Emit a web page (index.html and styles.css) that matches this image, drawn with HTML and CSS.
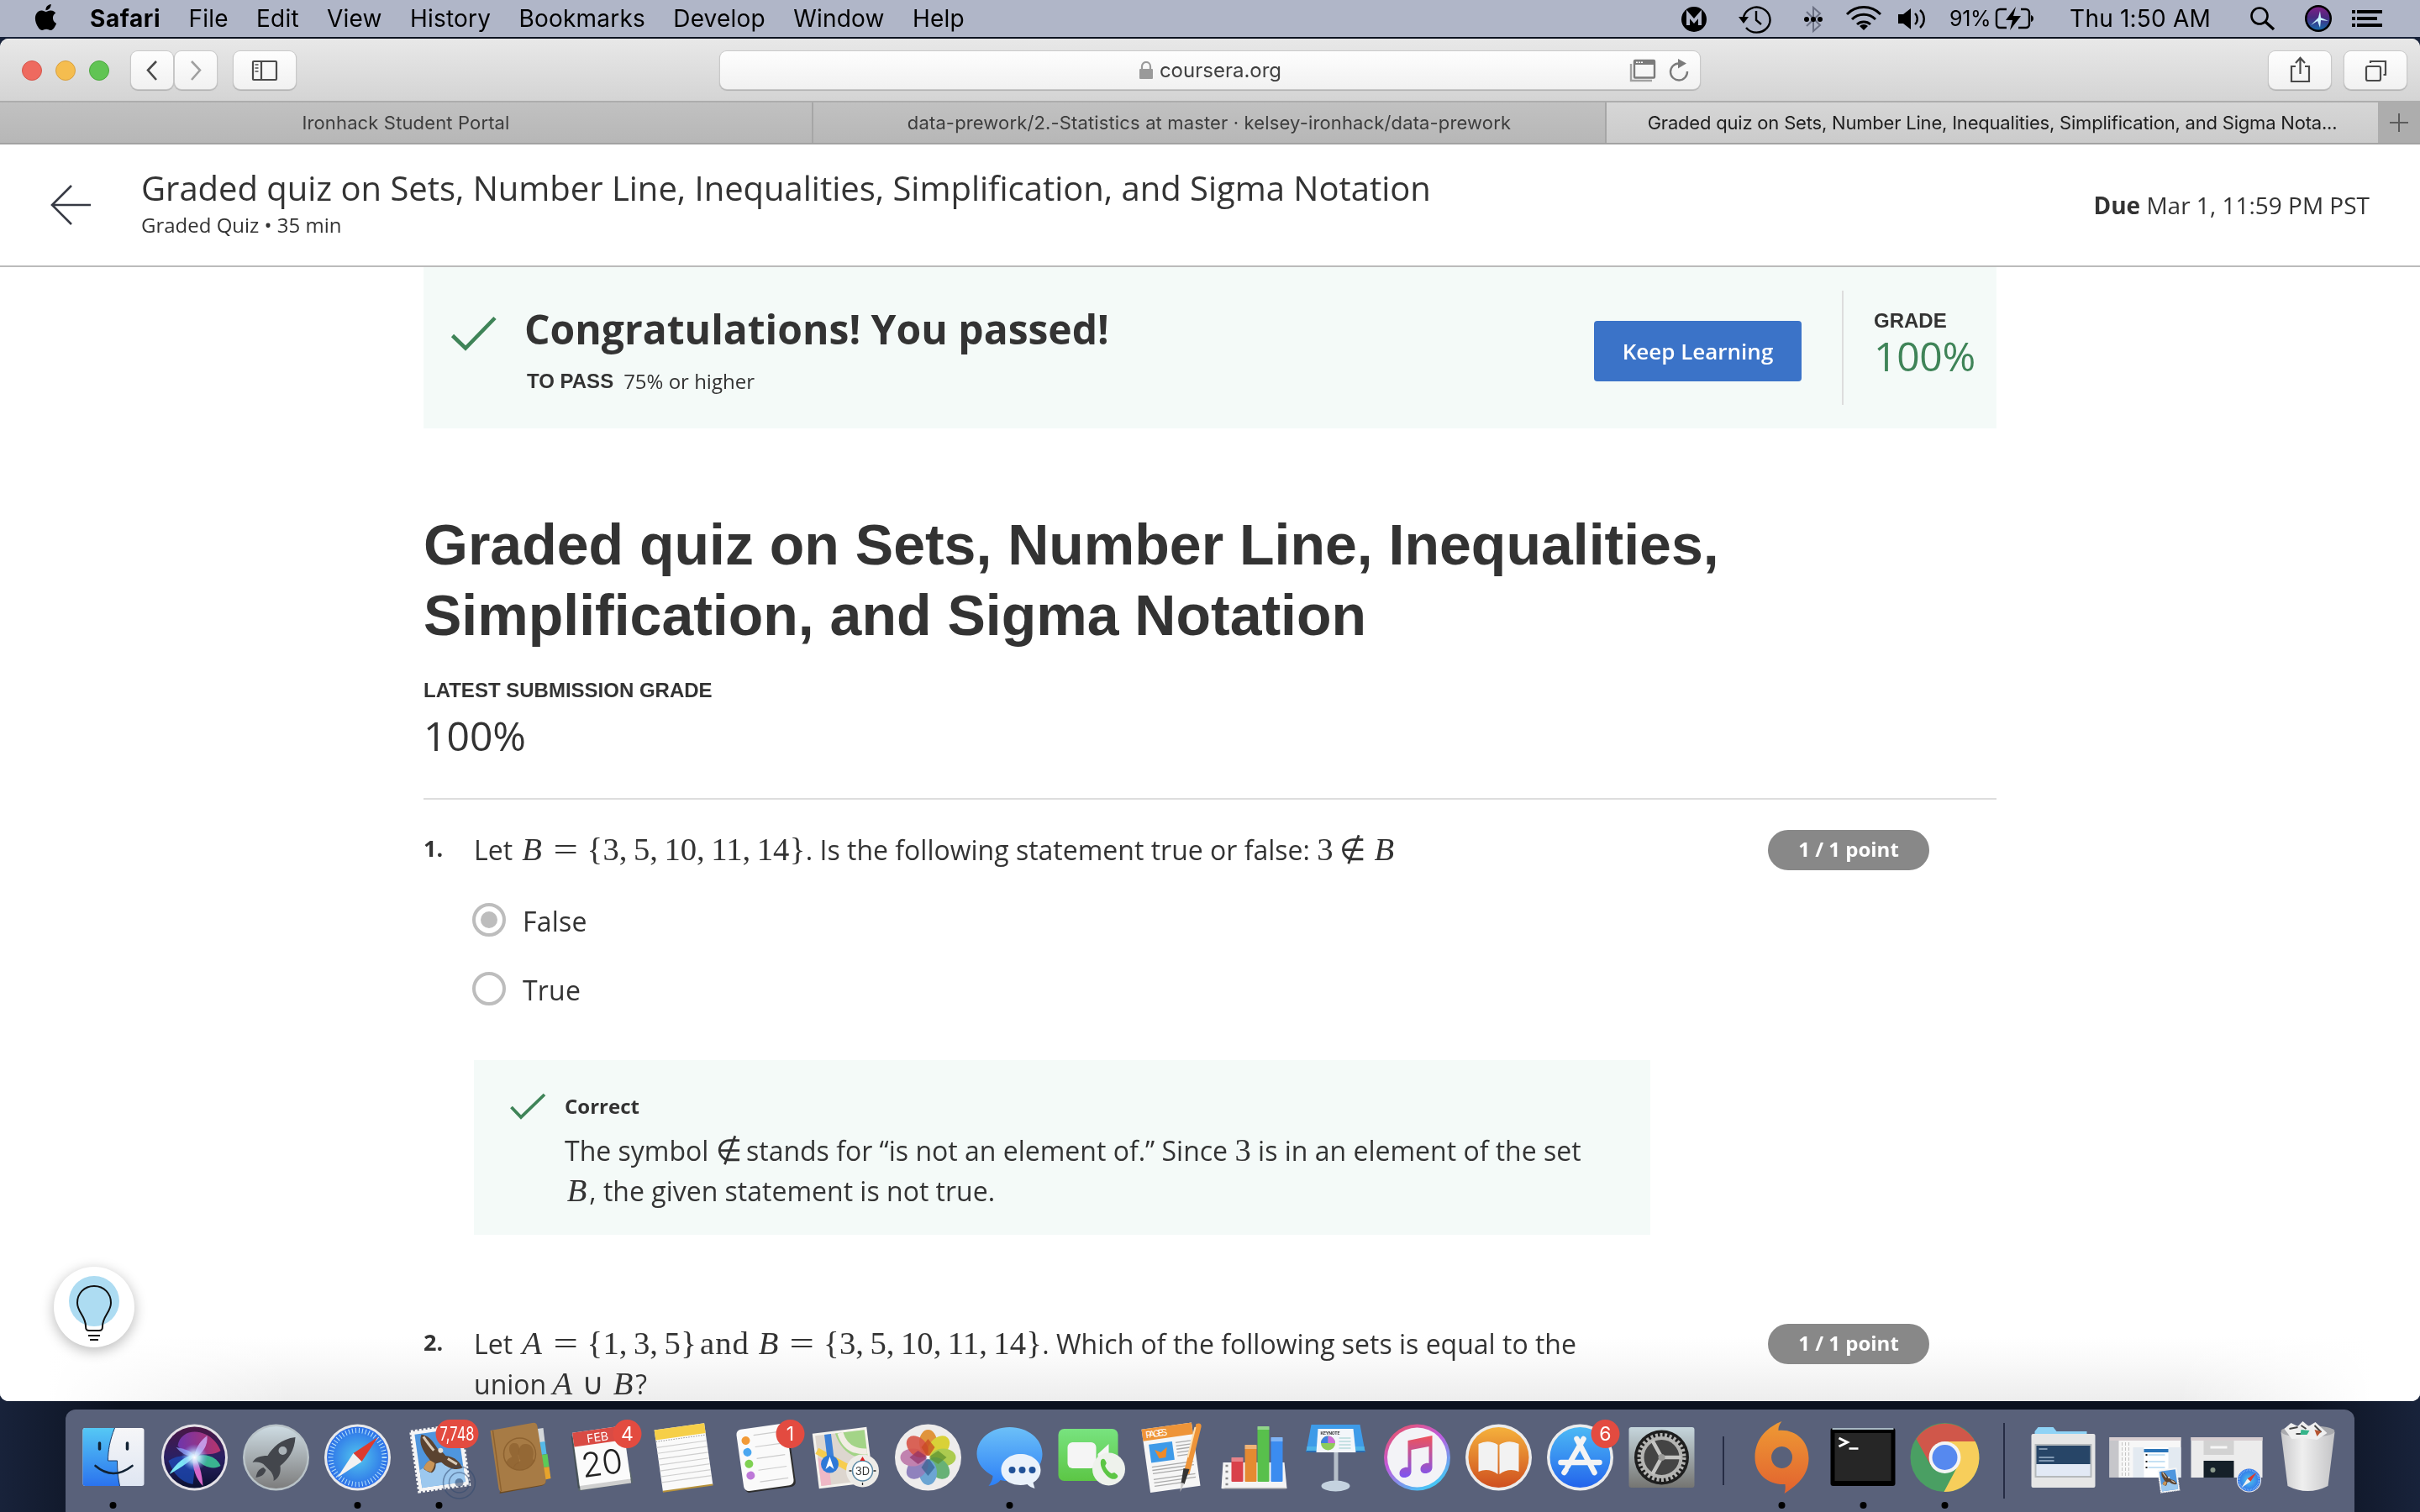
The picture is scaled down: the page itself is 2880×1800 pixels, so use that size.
FILE: index.html
```html
<!DOCTYPE html>
<html lang="en">
<head>
<meta charset="utf-8">
<title>Graded quiz</title>
<link rel="stylesheet" href="styles.css">
</head>
<body>
<div class="desktop">
<header class="menubar">
  <svg class="apple" width="31" height="31" viewBox="0 0 24 24"><path d="M12.152 6.896c-.948 0-2.415-1.078-3.96-1.04-2.04.027-3.91 1.183-4.961 3.014-2.117 3.675-.546 9.103 1.519 12.09 1.013 1.454 2.208 3.09 3.792 3.039 1.52-.065 2.09-.987 3.935-.987 1.831 0 2.35.987 3.96.948 1.637-.026 2.676-1.48 3.676-2.948 1.156-1.688 1.636-3.325 1.662-3.415-.039-.013-3.182-1.221-3.22-4.857-.026-3.04 2.48-4.494 2.597-4.559-1.429-2.09-3.623-2.324-4.39-2.376-2-.156-3.675 1.09-4.61 1.09zM15.53 3.83c.843-1.012 1.4-2.427 1.245-3.83-1.207.052-2.662.805-3.532 1.818-.78.896-1.454 2.338-1.273 3.714 1.338.104 2.715-.688 3.559-1.701"/></svg>
  <nav class="menus">
    <b>Safari</b><span>File</span><span>Edit</span><span>View</span><span>History</span><span>Bookmarks</span><span>Develop</span><span>Window</span><span>Help</span>
  </nav>
  <svg class="status" width="330" height="44" viewBox="1995 0 330 44">
    <circle cx="2019" cy="23" r="15"/><path d="M2012 30V17l7 8 7-8v13" fill="none" stroke="#b2b7c8" stroke-width="4"/>
    <g fill="none" stroke="#000" stroke-width="2.4"><path d="M2078 20a16 15 0 1 1 3 13"/><path d="M2093 13v11l6 5"/></g><path d="M2072 20h12l-6 8z"/>
    <path d="M2153 14l16 16-8 7V9l8 7-16 15" fill="none" stroke="#6b7083" stroke-width="2"/><circle cx="2153" cy="23" r="3"/><circle cx="2161" cy="23" r="3"/><circle cx="2169" cy="23" r="3"/>
    <g fill="none" stroke="#000" stroke-width="3"><path d="M2201 17a28 28 0 0 1 40 0M2207 23a20 20 0 0 1 28 0M2213 29a12 12 0 0 1 16 0"/></g><path d="M2216 31a7 7 0 0 1 10 0l-5 5z"/>
    <path d="M2262 17h6l9-7v25l-9-7h-6z"/><path d="M2282 16a9 9 0 0 1 0 13M2288 12a14 14 0 0 1 0 21" fill="none" stroke="#000" stroke-width="2.4"/>
  </svg>
  <span class="pct">91%</span>
  <svg class="batt" width="48" height="30" viewBox="0 0 48 30"><g fill="none" stroke="#000" stroke-width="2.4"><path d="M15 4H7a4 4 0 0 0-4 4v14a4 4 0 0 0 4 4h8M32 4h6a4 4 0 0 1 4 4v14a4 4 0 0 1-4 4h-9"/></g><path d="M26 1L14 17h8l-3 12 13-17h-9zM44 11v8q3-1 3-4t-3-4z"/></svg>
  <span class="clock">Thu 1:50 AM</span>
  <svg class="status2" width="170" height="44" viewBox="2670 0 170 44">
    <circle cx="2688" cy="19" r="9.5" fill="none" stroke="#000" stroke-width="2.6"/><path d="M2695 26l10 9" stroke="#000" stroke-width="3.4"/>
    <circle cx="2758" cy="22" r="16"/><circle cx="2758" cy="22" r="13.5" fill="url(#siri)"/><path d="M2749 30l9-9 2-8 1 8 9 4-9-1-1 9-3-8z" fill="#c9f3ff"/>
    <path d="M2804 12h30v4h-30zM2804 20h24v4h-24zM2804 28h30v4h-30zM2798 12h4v4h-4zM2798 20h4v4h-4zM2798 28h4v4h-4z"/>
    <defs><linearGradient id="siri" x1="0" y1="0" x2="0" y2="1"><stop offset="0" stop-color="#7d1f86"/><stop offset=".45" stop-color="#4a2a80"/><stop offset="1" stop-color="#1668a8"/></linearGradient></defs>
  </svg>
</header>

<div class="window">
  <div class="toolbar">
    <div class="lights"><i class="red"></i><i class="yellow"></i><i class="green"></i></div>
    <div class="navbtns">
      <div class="btn"><svg width="50" height="45"><path d="M30 12L20 22.500 30 34" fill="none" stroke="#4a4a4a" stroke-width="2.6"/></svg></div>
      <div class="btn"><svg width="50" height="45"><path d="M20 12l10 10.500L20 34" fill="none" stroke="#a0a0a0" stroke-width="2.6"/></svg></div>
    </div>
    <div class="btn side"><svg width="74" height="45"><g fill="none" stroke="#4a4a4a" stroke-width="2.2"><rect x="23" y="12" width="28" height="22" rx="1"/><path d="M33 12v22"/></g><path d="M25.500 16h4M25.500 20h4M25.500 24h4" stroke="#777" stroke-width="2"/></svg></div>
    <div class="url">
      <div class="addr"><svg width="18" height="22" viewBox="0 0 18 22"><rect x="1" y="9" width="16" height="12" rx="1" fill="#9a9a9a"/><path d="M4 9V6a5 5 0 0 1 10 0v3" fill="none" stroke="#9a9a9a" stroke-width="2.2"/></svg><span>coursera.org</span></div>
      <svg class="urlicons" width="76" height="45" viewBox="1940 61 76 45"><path d="M1942 76v20h25" fill="none" stroke="#a2a2a2" stroke-width="2.400"/><rect x="1946" y="72" width="24" height="20.500" rx="1" fill="none" stroke="#7b7b7b" stroke-width="2.400"/><path d="M1946 72h24v5h-24z" fill="#7b7b7b"/><path d="M1948 74.300h2m1 0h2m1 0h2" stroke="#fff" stroke-width="1.500"/><path d="M1999 75.500a10 10 0 1 0 10 9.500" fill="none" stroke="#7b7b7b" stroke-width="2.400"/><path d="M1998 70l10 5.500-10 6z" fill="#7b7b7b"/></svg>
    </div>
    <div class="btn share"><svg width="74" height="45"><g fill="none" stroke="#4a4a4a" stroke-width="2.200"><path d="M32 18h-5v18h21V18h-5M37.500 27V9M32 14l5.500-6 5.500 6"/></g></svg></div>
    <div class="btn tabsbtn"><svg width="74" height="45"><g fill="none" stroke="#4a4a4a" stroke-width="2.200"><rect x="26" y="18" width="17" height="17" rx="2"/><path d="M31 14v-2h18v16h-2.500"/></g></svg></div>
  </div>
  <div class="tabs">
    <div class="tab t1">Ironhack Student Portal</div>
    <div class="tab t2">data-prework/2.-Statistics at master · kelsey-ironhack/data-prework</div>
    <div class="tab t3">Graded quiz on Sets, Number Line, Inequalities, Simplification, and Sigma Nota...</div>
    <div class="tab plus"><svg width="24" height="24"><path d="M12 1v22M1 12h22" stroke="#5c5c5c" stroke-width="2"/></svg></div>
  </div>
  <div class="page">
    <div class="head">
      <svg class="back" width="50" height="50" viewBox="0 0 50 50"><path d="M25 2L2 25l23 23M2 25h46" fill="none" stroke="#373a44" stroke-width="2.600"/></svg>
      <div class="titles"><div class="ttl">Graded quiz on Sets, Number Line, Inequalities, Simplification, and Sigma Notation</div><div class="sub">Graded Quiz • 35 min</div></div>
      <div class="due"><b>Due</b> Mar 1, 11:59 PM PST</div>
    </div>
    <main>
      <section class="banner">
        <svg class="bigcheck" width="56" height="44" viewBox="535 375 56 44"><path d="M538.500 399.500l15.500 15L589 378.500" fill="none" stroke="#3f8458" stroke-width="4.600"/></svg>
        <div class="msg"><div class="congrats">Congratulations! You passed!</div><div class="topass"><b>TO PASS</b><span>75% or higher</span></div></div>
        <div class="keep">Keep Learning</div>
        <div class="grade"><div class="lbl">GRADE</div><div class="val">100%</div></div>
      </section>
      <h1>Graded quiz on Sets, Number Line, Inequalities,<br>Simplification, and Sigma Notation</h1>
      <div class="latest">LATEST SUBMISSION GRADE</div>
      <div class="score">100%</div>
      <section class="q q1">
        <div class="num">1.</div>
        <div class="body">
          <p>Let <span class="m"><i>B</i><u>=</u><s>{</s>3<q>,</q>5<q>,</q>10<q>,</q>11<q>,</q>14<s>}</s></span>. Is the following statement true or false: <span class="m">3<em>∉</em><i>B</i></span></p>
          <div class="opt o1"><span class="radio on"></span><span>False</span></div>
          <div class="opt o2"><span class="radio"></span><span>True</span></div>
          <div class="fb">
            <svg width="44" height="34" viewBox="606 1301 44 34"><path d="M608.500 1318l11.500 12L648 1303" fill="none" stroke="#3f8458" stroke-width="3.800"/></svg>
            <div><div class="correct">Correct</div>
            <p>The symbol <span class="m"><em class="n">∉</em></span> stands for “is not an element of.” Since <span class="m">3</span> is in an element of the set<br><span class="m"><i>B</i></span>, the given statement is not true.</p></div>
          </div>
        </div>
        <div class="pill">1 / 1 point</div>
      </section>
      <section class="q q2">
        <div class="num">2.</div>
        <div class="body">
          <p>Let <span class="m"><i>A</i><u>=</u><s>{</s>1<q>,</q>3<q>,</q>5<s>}</s><span class="and">and</span><i>B</i><u>=</u><s>{</s>3<q>,</q>5<q>,</q>10<q>,</q>11<q>,</q>14<s>}</s></span>. Which of the following sets is equal to the<br>union <span class="m un"><i>A</i><em class="cup">∪</em><i>B</i></span>?</p>
        </div>
        <div class="pill">1 / 1 point</div>
      </section>
    </main>
    <div class="bulb"><svg width="96" height="96" viewBox="-48 -48 96 96"><circle cy="-7" r="30" fill="#addcf2"/><path d="M0-25c-12 0-20 9-20 20 0 11 10 16 10 28 0 4 1 5 4 5h12c3 0 4-1 4-5 0-12 10-17 10-28 0-11-8-20-20-20z" fill="none" stroke="#111" stroke-width="2"/><path d="M-7 34H7M-5 39H5" stroke="#111" stroke-width="2"/></svg></div>
  </div>
</div>

<footer class="dock">
  <svg class="ico" viewBox="-48.5 -57 97 122"><defs><linearGradient id="fb" x2="0" y2="1"><stop stop-color="#55c8f5"/><stop offset="1" stop-color="#2b73ee"/></linearGradient><linearGradient id="fw" x2="0" y2="1"><stop stop-color="#f6f6f8"/><stop offset="1" stop-color="#dfe6f2"/></linearGradient></defs><rect x="-36" y="-35" width="73" height="69" rx="3" fill="url(#fw)"/><path d="M2-35C-4-20-6-8-6 4H5c0 11 1 21 3 30h-41a3 3 0 0 1-3-3v-63a3 3 0 0 1 3-3z" fill="url(#fb)"/><path d="M2-35C-4-20-6-8-6 4H5c0 11 1 21 3 30" fill="none" stroke="#1b3a66" stroke-width="1"/><path d="M-16-17v7M17-17v7" stroke="#123" stroke-width="3.500" stroke-linecap="round"/><path d="M-21 10Q0 28 23 10" fill="none" stroke="#123" stroke-width="2.600" stroke-linecap="round"/><circle cy="57" r="4"/></svg>
  <svg class="ico" viewBox="-48.5 -57 97 122"><defs><linearGradient id="sb" x2="0" y2="1"><stop stop-color="#4a1745"/><stop offset=".5" stop-color="#2a2063"/><stop offset="1" stop-color="#0b1030"/></linearGradient><radialGradient id="sg"><stop stop-color="#fff"/><stop offset=".4" stop-color="#c8e8ff" stop-opacity=".8"/><stop offset="1" stop-color="#7a9cff" stop-opacity="0"/></radialGradient><linearGradient id="sp1"><stop stop-color="#7b3bc0"/><stop offset="1" stop-color="#d83a70"/></linearGradient></defs><circle r="39.500" fill="#e4e1e6"/><circle r="36.500" fill="url(#sb)"/><path d="M-20-14C-16-38 20-36 31-8 22-2 10-4 0-4-8-4-16-8-20-14z" fill="url(#sp1)" opacity=".8"/><path d="M-31 4C-24 24-12 30-2 32 0 20 0 8 0 0-10-4-22-2-31 4z" fill="#1c4fc0" opacity=".7"/><path d="M0 0C10-6 26-2 31 10 22 16 8 10 0 0z" fill="#3ecf9a" opacity=".85"/><path d="M-30 20C-22 6-10-2 0-4 0 2-16 12-30 20z" fill="#7be6f5"/><path d="M0-2C6 8 9 20 10 34 2 26-3 12-2 0z" fill="#d766c8"/><path d="M0-2C2-14 8-20 15-26 16-14 10-6 2 0z" fill="#c9a3ee" opacity=".9"/><path d="M-22-12Q-6-10 0-2-12 0-22-12z" fill="#8d9cf8" opacity=".8"/><circle r="16" fill="url(#sg)"/></svg>
  <svg class="ico" viewBox="-48.5 -57 97 122"><defs><linearGradient id="rk" x2="0" y2="1"><stop stop-color="#cddbe2"/><stop offset="1" stop-color="#7d7d7d"/></linearGradient></defs><circle r="39.500" fill="#b9c3c8"/><circle r="37" fill="url(#rk)"/><path d="M23-24C6-22-4-12-10-2c-9 0-15 2-18 8 6-1 10 0 13 2l9 9c2 3 4 7 3 11 7-4 9-10 8-18C15 2 22-8 23-24z" fill="#43464c"/><circle cx="8" cy="-8" r="5" fill="#aab2b7"/><path d="M-15 12c-6 2-8 6-9 12 6-1 10-3 12-9z" fill="#43464c"/></svg>
  <svg class="ico" viewBox="-48.500 -57 97 122"><defs><radialGradient id="sf"><stop stop-color="#52c6ee"/><stop offset="1" stop-color="#2c6fe8"/></radialGradient><g id="compass"><circle r="39.500" fill="#e9e9ea"/><circle r="36.500" fill="url(#sf)"/><circle r="32" fill="none" stroke="#dff" stroke-width="6" stroke-dasharray="1 3" opacity=".8"/><path d="M24-24L5 5-5-5z" fill="#dd3b2e"/><path d="M-24 24L5 5-5-5z" fill="#f2f2f2"/></g></defs><use href="#compass"/><circle cy="57" r="4"/></svg>
  <svg class="ico" viewBox="-48.500 -57 97 122"><defs><g id="stamp" transform="rotate(-8)"><rect x="-29" y="-35" width="60" height="72" fill="#f5f5f5" stroke="#f5f5f5" stroke-width="3.500" stroke-dasharray="3 2"/><rect x="-25" y="-31" width="52" height="64" fill="#4f96de"/><path d="M-25 12Q0 0 27 14v19h-52z" fill="#9cc8ee"/><path d="M-17-30C-8-28-4-18 0-10c4 3 6 6 8 9 8 2 14 6 18 17-8 3-18-2-24-10-3 0-5 0-7 1 0 4-2 8-6 10-3-1-6-3-9-6 2-5 5-8 9-9C-18-10-22-20-17-30z" fill="#5b4330"/><path d="M-15-27c3 6 6 12 10 18M10 3l10 8" stroke="#d9cbb8" stroke-width="3"/><path d="M-20 10c2-4 5-7 9-8l5 4c-1 4-3 7-6 10-3-1-6-3-8-6z" fill="#c99558"/><circle cx="3" cy="-8" r="3" fill="#e6ded2"/></g></defs><use href="#stamp"/><g fill="none" stroke="#30486e" stroke-width="1.600" opacity=".5"><circle cx="24" cy="30" r="19"/><circle cx="24" cy="30" r="12"/></g><circle cx="24" cy="30" r="5" fill="#30486e" opacity=".6"/><rect x="-4" y="-45" width="51" height="34" rx="17" fill="#e34b40"/><text x="21.500" y="-20" class="bt" textLength="41" lengthAdjust="spacingAndGlyphs">7,748</text><circle cy="57" r="4"/></svg>
  <svg class="ico" viewBox="-48.500 -57 97 122"><path d="M20-34l7-1 2 17-7 1z" fill="#d3d7da"/><path d="M22-18l7-1 2 15-7 1z" fill="#55b9e8"/><path d="M25-3l7-1 2 15-7 1z" fill="#5ccb58"/><path d="M27 12l7-1 2 14-9 2z" fill="#e7a42c"/><path d="M-25 43l49-9q6-1 6-6l-54 10z" fill="#6d4a1f"/><path d="M-36-32L14-41q5-1 6 4l10 63q1 6-5 7l-47 8q-3 0-4-4z" fill="#a77b45"/><path d="M-33-32l10 72" stroke="#8d6230" stroke-width="1.500"/><circle cx="-1" cy="-4" r="19" fill="none" stroke="#8d6230" stroke-width="1.500"/><path d="M-17 7c1-6 5-6 7-8-7-10-2-17 3-16 6 0 7 8 4 15 1 3 2 4 1 9-4 1-5 4-6 6Q-14 12-17 7z" fill="#8d6230" opacity=".75"/><path d="M-9 14c1-7 6-8 9-10-5-8-2-20 5-20 8-1 12 7 10 15-1 3 0 4 2 5Q8 17-9 14z" fill="#8d6230" opacity=".75"/></svg>
  <svg class="ico" viewBox="-48.500 -57 97 122"><path d="M-36-22L-28 40 37 30 33 12z" fill="#5b676c"/><path d="M-36-25l8 61 62-10" fill="none" stroke="#454f55" stroke-width="1.500"/><g transform="rotate(-8)"><path d="M-31 22h61v13h-61z" fill="#cfcfcf"/><rect x="-31" y="-34" width="61" height="64" fill="#fbfbfb"/><path d="M-31-34h61v17h-61z" fill="#d94b44"/><text x="-2" y="-19.500" class="feb">FEB</text><text x="-1" y="21" class="day">20</text></g><circle cx="30" cy="-28" r="17" fill="#e34b40"/><text x="30" y="-20" class="bt">4</text></svg>
  <svg class="ico" viewBox="-48.500 -57 97 122"><g transform="rotate(-8)"><rect x="-30" y="-37" width="60" height="74" fill="#fafafa"/><rect x="-30" y="-37" width="60" height="12" fill="#f6cf48"/><path d="M-30-16h60M-30-9h60M-30-2h60M-30 5h60M-30 12h60M-30 19h60M-30 26h60" stroke="#cfcfcf" stroke-width="1.200"/><path d="M-30-23h60" stroke="#999" stroke-dasharray="1.500 1.500"/><path d="M-30 37h60" stroke="#b6913a" stroke-width="2"/></g></svg>
  <svg class="ico" viewBox="-48.500 -57 97 122"><g transform="rotate(-8)"><rect x="-29" y="-34" width="61" height="73" rx="6" fill="#2d2d2d"/><rect x="-30" y="-37" width="60" height="74" rx="6" fill="#fafafa"/><circle cx="-20" cy="-23" r="5" fill="#f29a36"/><circle cx="-20" cy="-9" r="5" fill="#4aa7f0"/><circle cx="-20" cy="5" r="5" fill="#7fd152"/><circle cx="-20" cy="19" r="5" fill="#bd78d8"/><path d="M-10-28h34M-10-14h34M-10 0h34M-10 14h34M-10 28h34" stroke="#ccc" stroke-width="1.200"/></g><circle cx="30" cy="-28" r="17" fill="#e34b40"/><text x="30" y="-20" class="bt">1</text></svg>
  <svg class="ico" viewBox="-48.500 -57 97 122"><g transform="rotate(-7) translate(-4 0)"><rect x="-33" y="-33" width="65" height="66" fill="#f5f3ee"/><rect x="-30" y="-30" width="59" height="60" fill="#ddd6cf"/><path d="M-6-30h35v35Q0 0-6-30z" fill="#a3d487"/><path d="M0-30Q4-6 29-4" fill="none" stroke="#f1ede4" stroke-width="7"/><path d="M-30-12L29 30" stroke="#f7cd4e" stroke-width="8"/><path d="M-30-4L-18 4v26h-12z" fill="#efb8c6"/><path d="M-15-30v34" stroke="#3c80d8" stroke-width="8"/></g><circle cx="-20" cy="8" r="10.500" fill="#2e79d8"/><path d="M-20-1l5 15-5-4-5 4z" fill="#fff"/><circle cx="19" cy="16" r="19.500" fill="#eeece8"/><circle cx="19" cy="16" r="12" fill="#fff" stroke="#5b88a4" stroke-width="1.500"/><text x="19" y="20.500" class="d3">3D</text><path d="M19-1l3 5h-6z" fill="#d22"/><path d="M19 30v3M3 16h3M32 16h3" stroke="#222" stroke-width="1.300"/></svg>
  <svg class="ico" viewBox="-48.500 -57 97 122"><circle r="39.500" fill="#eeecec"/><g style="mix-blend-mode:multiply"><ellipse cy="-18" rx="10.500" ry="15" fill="#f0a040"/><ellipse cy="-18" rx="10.500" ry="15" fill="#e9e23c" transform="rotate(45)"/><ellipse cy="-18" rx="10.500" ry="15" fill="#b9dc55" transform="rotate(90)"/><ellipse cy="-18" rx="10.500" ry="15" fill="#6ec07f" transform="rotate(135)"/><ellipse cy="-18" rx="10.500" ry="15" fill="#74b2e4" transform="rotate(180)"/><ellipse cy="-18" rx="10.500" ry="15" fill="#9a8ccc" transform="rotate(225)"/><ellipse cy="-18" rx="10.500" ry="15" fill="#cf8dbd" transform="rotate(270)"/><ellipse cy="-18" rx="10.500" ry="15" fill="#e75b4c" transform="rotate(315)" opacity=".9"/></g><path d="M0 0L-8-12 0-22 8-12z" fill="#c84a20" opacity=".75"/><path d="M0 0l12-8 10 8-10 8z" fill="#5b8f2c" opacity=".7"/><path d="M0 0L-8 12 0 22 8 12z" fill="#33608f" opacity=".7"/><path d="M0 0l-12-8-10 8 10 8z" fill="#8f2f66" opacity=".7"/><circle r="2" fill="#fff"/></svg>
  <svg class="ico" viewBox="-48.500 -57 97 122"><defs><linearGradient id="mg" x2="0" y2="1"><stop stop-color="#6cc0f8"/><stop offset="1" stop-color="#2c7ff6"/></linearGradient></defs><path d="M0-36c22 0 39 14 39 32S22 28 0 28c-4 0-8 0-11-1-3 4-8 6-14 7 3-4 5-8 5-12C-31 16-39 7-39-4c0-18 17-32 39-32z" fill="url(#mg)"/><path d="M13-4c13 0 24 8 24 19 0 7-4 12-9 15l2 7c-4-1-7-3-9-5-17 4-31-5-31-17 0-11 10-19 23-19z" fill="#eaf2fb"/><circle cx="3" cy="15" r="4" fill="#215298"/><circle cx="15" cy="15" r="4" fill="#215298"/><circle cx="27" cy="15" r="4" fill="#215298"/><circle cy="57" r="4"/></svg>
  <svg class="ico" viewBox="-48.500 -57 97 122"><defs><linearGradient id="fg" x2="0" y2="1"><stop stop-color="#78e37f"/><stop offset="1" stop-color="#5cc645"/></linearGradient></defs><rect x="-39" y="-34" width="71" height="62" rx="7" fill="url(#fg)"/><rect x="-28" y="-18" width="34" height="31" rx="6" fill="#f5f5f5"/><path d="M8-4l13-12v26L8 4z" fill="#f5f5f5"/><circle cx="21" cy="14" r="19.500" fill="#eef2ec"/><path d="M12 3c3-3 5 0 6 3 1 2-2 3-1 5 2 4 4 6 7 8 3 0 3-2 5 0 3 2 4 4 1 6C22 30 8 12 12 3z" fill="#5cc645"/></svg>
  <svg class="ico" viewBox="-48.500 -57 97 122"><g transform="rotate(-8)"><rect x="-32" y="-38" width="60" height="76" fill="#f6f6f6"/><rect x="-32" y="-38" width="60" height="14" fill="#ee9438"/><text x="-28" y="-27" class="pg" textLength="26">PAGES</text><rect x="-26" y="-19" width="28" height="22" fill="#3e9ae8"/><path d="M-20-12l7 4 8-5-3 12h-8z" fill="#f08a28"/><path d="M6-17h18M6-13h18M6-9h18M6-5h18M6-1h18M-26 8h50M-26 12h50M-26 16h44M-26 23h50M-26 27h50M-26 31h34" stroke="#aaa" stroke-width="1.300"/></g><path d="M28-40q7-2 6 4L20 20l-7-1z" fill="#ee9438"/><path d="M27-36l-9 36" stroke="#ffe0b0" stroke-width="2"/><path d="M20 14l-7-1-3 18 4 1z" fill="#333"/><path d="M10 30l4 1-5 10z" fill="#ccc"/></svg>
  <svg class="ico" viewBox="-48.500 -57 97 122"><path d="M-37 6h73l3 31h-78z" fill="#f4f4f4"/><path d="M-34 36h72v1.500h-77z" fill="#bbb"/><path d="M-34 10h3M-34 17h3M-34 25h3M-34 32h3" stroke="#888" stroke-width="2.500"/><rect x="-27" y="0" width="14" height="29" rx="1" fill="#d9414a"/><rect x="-11" y="-15" width="14" height="44" rx="1" fill="#e58a31"/><rect x="4" y="-37" width="14" height="66" rx="1" fill="#58c04c"/><rect x="20" y="-24" width="14" height="53" rx="1" fill="#3b8cf0"/><path d="M-27 0h14v5h-14zM-11-15H3v5h-14zM4-37h14v4H4zM20-24h14v5H20z" fill="#fff" opacity=".35"/></svg>
  <svg class="ico" viewBox="-48.500 -57 97 122"><path d="M-2-10h5v44h-5z" fill="#b6bfc9"/><ellipse cy="34" rx="17" ry="6.500" fill="#c4d2df"/><path d="M-29-39h58l6 32h-70z" fill="#3e9be8"/><path d="M-34-13h68l1 6h-70z" fill="#4fb4e8"/><path d="M-35-6h70v-2h-70z" fill="#2a6cb0"/><path d="M-21-34h42l3 28h-47z" fill="#f3f6fa"/><text x="-18" y="-27" class="kn" textLength="23">KEYNOTE</text><circle cx="-9" cy="-17" r="8.500" fill="#8ecb5a"/><path d="M-9-17v-8.500a8.500 8.500 0 0 0-8.500 8.500z" fill="#3e7fe0"/><path d="M-9-17v-8.500a8.500 8.500 0 0 1 8.500 8.500z" fill="#cf6cd8"/><path d="M4-23h14M4-19h14M4-15h14M4-11h14" stroke="#9cc"/></svg>
  <svg class="ico" viewBox="-48.500 -57 97 122"><defs><linearGradient id="im" x2=".6" y2="1"><stop stop-color="#f3524e"/><stop offset=".5" stop-color="#c05be0"/><stop offset="1" stop-color="#46c6f6"/></linearGradient><linearGradient id="in" x2="0" y2="1"><stop stop-color="#f0525a"/><stop offset="1" stop-color="#7d55f2"/></linearGradient></defs><circle r="39.500" fill="url(#im)"/><circle r="35.500" fill="#f3f3f7"/><path d="M-11-20l29-6v38c0 8-14 10-14 2 0-6 7-8 10-7v-20l-21 4v26c0 8-14 10-14 2 0-6 7-8 10-7z" fill="url(#in)"/></svg>
  <svg class="ico" viewBox="-48.500 -57 97 122"><defs><linearGradient id="bk" x2="0" y2="1"><stop stop-color="#f5b13c"/><stop offset="1" stop-color="#cf4f1f"/></linearGradient></defs><circle r="39.500" fill="#ececec"/><circle r="36" fill="url(#bk)"/><path d="M-24-16q12-6 23 1v35q-11-8-23-3zM24-16q-12-6-23 1v35q11-8 23-3z" fill="#f2f2f2"/></svg>
  <svg class="ico" viewBox="-48.500 -57 97 122"><defs><linearGradient id="as" x2="0" y2="1"><stop stop-color="#4cb9f5"/><stop offset="1" stop-color="#2364ec"/></linearGradient></defs><circle r="39.500" fill="#ececec"/><circle r="36" fill="url(#as)"/><path d="M-4-22L17 18M4-22l-19 33M-23 6h46M-17 15l-2 3" stroke="#f4f4f4" stroke-width="6.500" stroke-linecap="round"/><circle cx="30" cy="-28" r="17" fill="#e34b40"/><text x="30" y="-20" class="bt">6</text></svg>
  <svg class="ico" viewBox="-48.500 -57 97 122"><defs><linearGradient id="sp" x2="0" y2="1"><stop stop-color="#c6d6dd"/><stop offset="1" stop-color="#757572"/></linearGradient></defs><rect x="-39" y="-36" width="78" height="72" rx="3" fill="url(#sp)"/><circle r="32.500" fill="#1e1e1e"/><circle r="23" fill="#444" stroke="#b4b4b2" stroke-width="4"/><circle r="26.500" fill="none" stroke="#b4b4b2" stroke-width="5" stroke-dasharray="3 2.550"/><path d="M0 0l-11-20M0 0l-11 20M0 0h23" stroke="#c4c4c2" stroke-width="4.500"/><circle r="4" fill="#9a9a98"/></svg>
  <svg viewBox="0 0 46 122" width="46" height="122"><path d="M25 32v58" stroke="#262c44" stroke-width="2"/></svg>
  <svg class="ico" viewBox="-48.500 -57 97 122"><defs><linearGradient id="or" x2="0" y2="1"><stop stop-color="#ee9a34"/><stop offset="1" stop-color="#e2622f"/></linearGradient></defs><path d="M0-43c-4 5-4 8-4 11C16-34 32-20 32 1 32 22 17 34 3 43c2-6 1-9 1-11C-16 33-32 20-32 0-32-24-15-37 0-43zM0-13a12.500 13 0 1 0 .1 0z" fill="url(#or)" fill-rule="evenodd"/><circle cy="57" r="4"/></svg>
  <svg class="ico" viewBox="-48.500 -57 97 122"><rect x="-39" y="-35" width="77" height="69" rx="3" fill="#000"/><path d="M-37-34h73" stroke="#a9bac4" stroke-width="2"/><rect x="-34" y="-29" width="67" height="57" fill="#262626"/><path d="M-29-23l10 5-10 5" fill="none" stroke="#fff" stroke-width="3"/><path d="M-17-10.500h11" stroke="#fff" stroke-width="2.500"/><circle cy="57" r="4"/></svg>
  <svg class="ico" viewBox="-48.500 -57 97 122"><circle r="41" fill="#4a9f63"/><path d="M-17 9L-34-22A41 41 0 0 1 36-19H0z" fill="#d0574a"/><path d="M0-19h36.300A41 41 0 0 1-1 41L16 9z" fill="#f7ce5b"/><circle r="19" fill="#f4f4f4"/><circle r="15" fill="#5689ef"/><circle cy="57" r="4"/></svg>
  <svg viewBox="0 0 44 122" width="44" height="122"><path d="M22 16v90" stroke="#262c44" stroke-width="2"/></svg>
  <svg class="ico" viewBox="-48.500 -57 97 122"><path d="M-34-28v-3l4-5h18l4 5h36v5z" fill="#8fd3f6"/><rect x="-38" y="-28" width="76" height="64" rx="2" fill="#e6e6e6"/><rect x="-34" y="-16" width="68" height="40" fill="#b5b9bc"/><rect x="-32" y="-14" width="64" height="22" fill="#274567"/><rect x="-32" y="8" width="64" height="14" fill="#e2e9f5"/><path d="M-29-10h10M-29 0h18M-29 4h18" stroke="#9fb4cc" stroke-width="1.500"/></svg>
  <svg class="ico" viewBox="-48.500 -57 97 122"><rect x="-42" y="-24" width="85" height="48" fill="#f7f7f7"/><rect x="-42" y="-24" width="85" height="4" fill="#d7cdd0"/><rect x="-42" y="-20" width="11" height="44" fill="#c6c6ca"/><path d="M-27-18v42M-23-18v42M-19-18v42" stroke="#c4c4c4" stroke-dasharray="4 2"/><rect x="-14" y="-12" width="57" height="36" fill="#e3eaf1"/><rect x="-1" y="-12" width="29" height="36" fill="#fff"/><rect x="-1" y="-10" width="29" height="4" fill="#2a74b8"/><path d="M4-3h20M4 5h20M4 12h20" stroke="#8cc3e8"/><path d="M1-3h2M1 5h2M1 12h2" stroke="#222" stroke-width="2"/><use href="#stamp" transform="translate(28 27) scale(.37)"/></svg>
  <svg class="ico" viewBox="-48.500 -57 97 122"><rect x="-42" y="-24" width="85" height="48" fill="#ececec"/><rect x="-42" y="-24" width="85" height="4" fill="#d7cdd0"/><rect x="-27" y="-20" width="36" height="17" fill="#d2d2d2"/><path d="M-19-12h20" stroke="#f6f6f6" stroke-width="3"/><rect x="-27" y="4" width="36" height="20" fill="#152029"/><circle cx="-16" cy="15" r="3" fill="#8b9a8c"/><use href="#compass" transform="translate(27 27) scale(.37)"/></svg>
  <svg class="ico" viewBox="-48.500 -57 97 122"><defs><linearGradient id="tr" x2="1" y2="0"><stop stop-color="#c9c9cb"/><stop offset=".4" stop-color="#efefef"/><stop offset="1" stop-color="#c4c4c6"/></linearGradient></defs><path d="M-32-30L-24 34Q0 46 24 34L32-30z" fill="url(#tr)"/><ellipse cy="-31" rx="32" ry="7" fill="#a9aaae"/><path d="M-28-34l8-7 8 4 6-6 7 6 8-5 14 13-12 8-16-2-14 1z" fill="#efefef"/><path d="M-22-34l10-2M-8-38l6 4M8-38l8 8M-14-28h6" stroke="#444" stroke-width="2"/><path d="M-8-33l10 1-3 5h-8z" fill="#35b48a"/><path d="M8-33l8 2-5 6z" fill="#b5532f"/></svg>
</footer>
</div>
</body>
</html>
```
FILE: styles.css
```css
* { box-sizing: border-box; }
body { margin: 0; width: 2880px; height: 1800px; overflow: hidden; }
svg { display: block; flex: none; }
.desktop { width: 2880px; height: 1800px; display: flex; flex-direction: column; overflow: hidden; background: linear-gradient(90deg, rgba(34,48,80,.55), transparent 5%, transparent 95%, rgba(34,48,80,.55)), #0c1220; font-family: Inter, sans-serif; }

/* menu bar */
.menubar { height: 44px; margin-bottom: 2px; display: flex; align-items: center; background: #b0b6c8; font-size: 28px; line-height: 46px; color: #000; letter-spacing: .2px; white-space: nowrap; flex: none; }
.apple { margin: -4px 37px 0 39px; }
.menus { display: flex; gap: 33.3px; margin-right: auto; }
.menus b { letter-spacing: .6px; }
.status { margin-right: -2px; }
.pct { margin-right: 4px; font-size: 25px; letter-spacing: -.4px; }
.batt { margin-right: 42px; }
.clock { margin-right: 40px; }
.status2 { margin-right: 39px; }

/* browser */
.window { height: 1622px; display: flex; flex-direction: column; border-radius: 10px; overflow: hidden; background: #fff; flex: none; }
.toolbar { height: 74px; display: flex; align-items: flex-start; padding-top: 15px; background: linear-gradient(#e8e8e8, #d4d4d4); flex: none; }
.lights { display: flex; gap: 16px; margin: 11px 26px 0 26px; }
.lights i { width: 24px; height: 24px; border-radius: 50%; }
.red { background: #ee6a5f; border: 1px solid #d5564b; }
.yellow { background: #f5bd4f; border: 1px solid #d8a040; }
.green { background: #61c454; border: 1px solid #4ca83f; }
.navbtns { display: flex; gap: 2px; }
.btn, .url { height: 45px; border-radius: 8px; background: linear-gradient(#fefefe, #f1f1f1); box-shadow: 0 0 0 1px #c9c9c9, 0 1px 1px 1px #b0b0b0; }
.side { margin: 0 505px 0 20px; }
.url { width: 1166px; display: flex; position: relative; justify-content: center; }
.addr { display: flex; align-items: center; gap: 7px; font-size: 24px; line-height: 49px; color: #404040; }
.addr svg { margin-top: 1px; }
.urlicons { position: absolute; right: 8px; top: 0; }
.share { margin-left: auto; }
.tabsbtn { margin: 0 16px; }
.tabs { height: 52px; display: flex; flex: none; border-top: 2px solid #adadad; border-bottom: 2px solid #a2a2a2; font-size: 22px; line-height: 48px; letter-spacing: .14px; color: #3d3d3d; text-align: center; white-space: nowrap; }
.tab { background: linear-gradient(#c1c1c1, #b7b7b7); border-right: 2px solid #a6a6a6; }
.t1 { width: 968px; }
.t2 { width: 944px; }
.t3 { width: 918px; background: linear-gradient(#d6d6d6, #cbcbcb); color: #1e1e1e; border: 0; letter-spacing: -.2px; }
.plus { width: 50px; display: flex; align-items: center; justify-content: center; border: 0; background: #adadad; }

/* course page */
.page { position: relative; height: 1496px; font-family: "Open Sans", sans-serif; color: #333; background: linear-gradient(90deg, #fff 2%, transparent 12%, transparent 90%, #fff 98%), linear-gradient(#fff 1420px, #f9f9f9 1450px, #ededed 1496px); }
.head { height: 146px; border-bottom: 2px solid #bbb; display: flex; background: #fff; white-space: nowrap; }
.back { margin: 47px 58px 0 60px; }
.titles { padding-top: 26px; margin-right: auto; }
.ttl { font-size: 40px; line-height: 52px; letter-spacing: -.02px; }
.sub { font-size: 24px; line-height: 36px; }
.due { font-size: 28px; line-height: 144px; margin-right: 60px; }
main { width: 1872px; height: 1350px; margin-left: 504px; overflow: hidden; white-space: nowrap; }
.banner { height: 192px; display: flex; background: #f4faf8; }
.bigcheck { margin: 57px 33px 0 31px; }
.msg { padding-top: 42px; margin-right: auto; }
.congrats { font-size: 48px; font-weight: 700; line-height: 64px; }
.topass { font-size: 24px; line-height: 36px; margin: 12px 0 0 3px; display: flex; gap: 12px; }
.topass b, .lbl, .latest, h1 { font-family: "Liberation Sans", sans-serif; font-weight: 700; }
.keep { width: 247px; height: 72px; margin: 64px 48px 0 0; border-radius: 4px; background: #3b73c8; color: #fff; font-size: 26px; font-weight: 600; line-height: 72px; text-align: center; }
.grade { margin-top: 28px; height: 136px; width: 184px; border-left: 2px solid #ddd; padding: 18px 0 0 36px; }
.lbl { font-size: 24px; line-height: 36px; }
.val { font-size: 48px; line-height: 64px; color: #3f8458; margin-top: -8px; letter-spacing: -.3px; }
h1 { margin: 96px 0 0; font-size: 68px; line-height: 84px; }
.latest { font-size: 24px; line-height: 36px; margin-top: 30px; }
.score { font-size: 48px; line-height: 64px; margin-top: 4px; border-bottom: 2px solid #ddd; height: 108px; }
.q { display: flex; align-items: flex-start; }
.q1 { padding-top: 36px; }
.q2 { padding-top: 106px; }
.num { width: 60px; font-size: 27px; font-weight: 700; line-height: 44px; }
.body { width: 1400px; font-size: 32px; line-height: 48px; margin-right: 140px; }
p { margin: 0; }
.opt { display: flex; align-items: center; gap: 20px; margin-left: -2px; letter-spacing: .2px; }
.o1 { margin-top: 37px; }
.o2 { margin-top: 34px; }
.radio { width: 40px; height: 40px; border: 4px solid #bdbdbd; border-radius: 50%; padding: 6px; margin-top: -5px; }
.radio.on::after { content: ""; display: block; width: 20px; height: 20px; border-radius: 50%; background: #bdbdbd; }
.fb { margin-top: 59px; height: 208px; background: #f4faf8; display: flex; padding-top: 37px; }
.fb svg { margin: 2px 22px 0 42px; }
.correct { font-size: 24px; font-weight: 700; line-height: 36px; margin-bottom: 11px; }
.pill { width: 192px; height: 48px; border-radius: 24px; background: #888; color: #fff; font-size: 24px; font-weight: 700; line-height: 46px; text-align: center; }

/* inline math */
.m { font: 38.7px/0 "Liberation Serif", serif; }
.m i, .m u, .m s, .m q, .m em { display: inline-block; text-decoration: none; font-style: normal; line-height: 0; quotes: none; }
.m q::before, .m q::after { content: none; }
.m i { font-style: italic; width: .759em; text-align: center; }
.m u { width: 1.3em; text-align: center; transform: scaleX(1.35); }
.m s { width: .5em; text-align: center; }
.m q { width: .444em; }
.m em { font-family: "DejaVu Sans", sans-serif; font-size: 36px; width: 46px; text-align: center; }
.m em.n { width: 28px; }
.m em.cup { width: 43px; font-size: 36px; }
.m.un { margin-left: -4px; }
.and { margin: 0 8px 0 4px; letter-spacing: 1px; }

.bulb { position: absolute; left: 64px; top: 1336px; width: 96px; height: 96px; border-radius: 50%; background: #fff; box-shadow: 0 4px 16px rgba(0,0,0,.28); }

/* dock */
.dock { width: 2724px; height: 122px; margin: 10px 0 0 78px; padding: 0 8px; display: flex; border-radius: 12px 12px 0 0; background: #59617a; flex: none; }
.ico { width: 97px; height: 122px; overflow: visible; }
.bt { font: 23px Inter; fill: #fff; text-anchor: middle; }
.feb { font: 14px Inter; fill: #fff; text-anchor: middle; }
.day { font: 40px Inter; font-weight: 300; fill: #222; text-anchor: middle; }
.d3 { font: 13px Inter; fill: #333; text-anchor: middle; }
.pg { font: 11px Inter; fill: #fff; }
.kn { font: bold 5px Inter; fill: #333; }
```
